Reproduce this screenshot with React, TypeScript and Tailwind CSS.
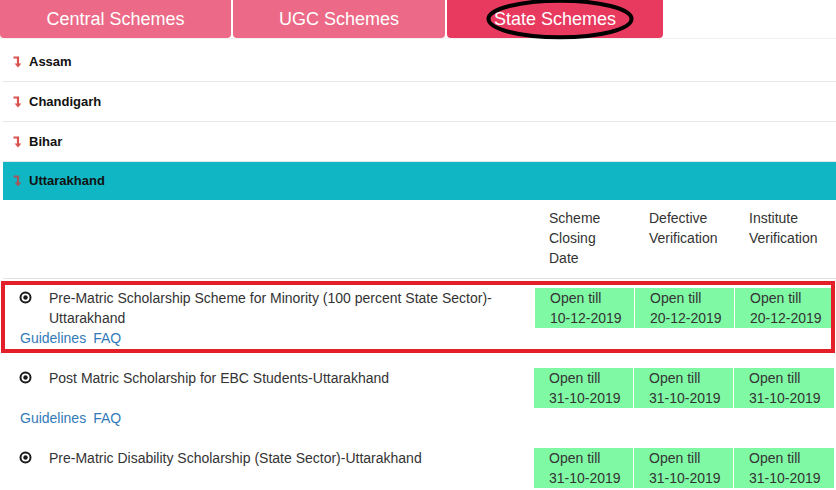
import React from "react";

const font = { fontFamily: '"Liberation Sans", Arial, sans-serif' };

function CornerArrow({ color }: { color: string }) {
  return (
    <svg width="9" height="12" viewBox="0 0 9 12" className="shrink-0">
      <path d="M0.5 1.5 H5 V8" fill="none" stroke={color} strokeWidth="2.2" />
      <polygon points="1.6,7.5 8.4,7.5 5,11.6" fill={color} />
    </svg>
  );
}

function RecordIcon() {
  return (
    <svg width="13" height="13" viewBox="0 0 13 13" className="shrink-0">
      <circle cx="6.5" cy="6.5" r="5" fill="none" stroke="#1a1a1a" strokeWidth="2" />
      <circle cx="6.5" cy="6.5" r="2.2" fill="#1a1a1a" />
    </svg>
  );
}

type Row = { title: string; dates: [string, string, string] };

const rows: Row[] = [
  {
    title: "Pre-Matric Scholarship Scheme for Minority (100 percent State Sector)-Uttarakhand",
    dates: ["10-12-2019", "20-12-2019", "20-12-2019"],
  },
  {
    title: "Post Matric Scholarship for EBC Students-Uttarakhand",
    dates: ["31-10-2019", "31-10-2019", "31-10-2019"],
  },
  {
    title: "Pre-Matric Disability Scholarship (State Sector)-Uttarakhand",
    dates: ["31-10-2019", "31-10-2019", "31-10-2019"],
  },
];

function GreenCell({ date, last, w }: { date: string; last?: boolean; w: string }) {
  return (
    <div
      className={`${w} shrink-0 h-[40px] bg-[#80f9a5] pl-[15px] text-[14px] leading-[20px] text-[#333] ${
        last ? "" : "border-r border-white"
      }`}
    >
      <div>Open till</div>
      <div>{date}</div>
    </div>
  );
}

function SchemeRow({ row, boxed, links = true }: { row: Row; boxed?: boolean; links?: boolean }) {
  return (
    <div>
      <div className="flex items-start">
        <div className={`flex-1 flex items-start ${boxed ? "pl-[14px]" : "pl-[16px]"} pr-[8px]`}>
          <div className="pt-[3px] w-[13px] mr-[17px]">
            <RecordIcon />
          </div>
          <div className="text-[14px] leading-[20px] text-[#333]">{row.title}</div>
        </div>
        <GreenCell date={row.dates[0]} w="w-[100px]" />
        <GreenCell date={row.dates[1]} w="w-[100px]" />
        <GreenCell date={row.dates[2]} w={boxed ? "w-[96px]" : "w-[100px]"} last />
        {!boxed && <div className="w-[2px] shrink-0" />}
      </div>
      {links && (
        <div
          className={`flex gap-[7px] text-[14px] leading-[20px] text-[#337ab7] ${
            boxed ? "pl-[15px]" : "pl-[17px]"
          }`}
        >
          <span>Guidelines</span>
          <span>FAQ</span>
        </div>
      )}
    </div>
  );
}

export default function App() {
  return (
    <div className="w-[836px] h-[490px] overflow-hidden bg-white" style={font}>
      {/* Tabs */}
      <div className="h-[39px] border-b border-[#f2f2f2] flex gap-[2px]">
        <div className="w-[231px] h-[38px] bg-[#ec6a87] rounded-b-[4px] flex items-center justify-center text-white text-[18px]">
          Central Schemes
        </div>
        <div className="w-[212px] h-[38px] bg-[#ec6a87] rounded-b-[4px] flex items-center justify-center text-white text-[18px]">
          UGC Schemes
        </div>
        <div className="relative w-[216px] h-[38px] bg-[#e8395f] rounded-b-[4px] flex items-center justify-center text-white text-[18px]">
          <span className="relative">State Schemes</span>
          <svg
            className="absolute left-[39px] top-[-2px]"
            width="149"
            height="44"
            viewBox="0 0 149 44"
          >
            <ellipse cx="74" cy="21" rx="71.5" ry="18.3" fill="none" stroke="#000" strokeWidth="4" />
          </svg>
        </div>
      </div>

      <div className="ml-[3px] mt-[3px]">
        {["Assam", "Chandigarh", "Bihar"].map((s) => (
          <div
            key={s}
            className="h-[40px] border-b border-[#e6e6e6] flex items-center pl-[10px] gap-[7px] text-[13px] font-bold text-[#111]"
          >
            <CornerArrow color="#d9534f" />
            <span>{s}</span>
          </div>
        ))}
        <div className="h-[38px] bg-[#10b6c3] flex items-center pl-[10px] gap-[7px] text-[13px] font-bold text-[#111]">
          <CornerArrow color="#a4585c" />
          <span>Uttarakhand</span>
        </div>

        {/* header */}
        <div className="flex pt-[8px] pb-[10px] border-b border-[#e2e2e2] text-[14px] leading-[20px] text-[#333]">
          <div className="flex-1" />
          <div className="w-[100px] pl-[15px] pr-[8px]">Scheme Closing Date</div>
          <div className="w-[100px] pl-[15px] pr-[8px]">Defective Verification</div>
          <div className="w-[100px] pl-[15px] pr-[8px]">Institute Verification</div>
          <div className="w-[2px]" />
        </div>

        <div className="-ml-[2px] mr-[1px] mt-[2px] border-4 border-[#e3202a] pt-[3px] pb-[1px] mb-[15px]">
          <SchemeRow row={rows[0]} boxed />
        </div>
        <div className="pb-[20px]">
          <SchemeRow row={rows[1]} />
        </div>
        <div>
          <SchemeRow row={rows[2]} links={false} />
        </div>
      </div>
    </div>
  );
}
